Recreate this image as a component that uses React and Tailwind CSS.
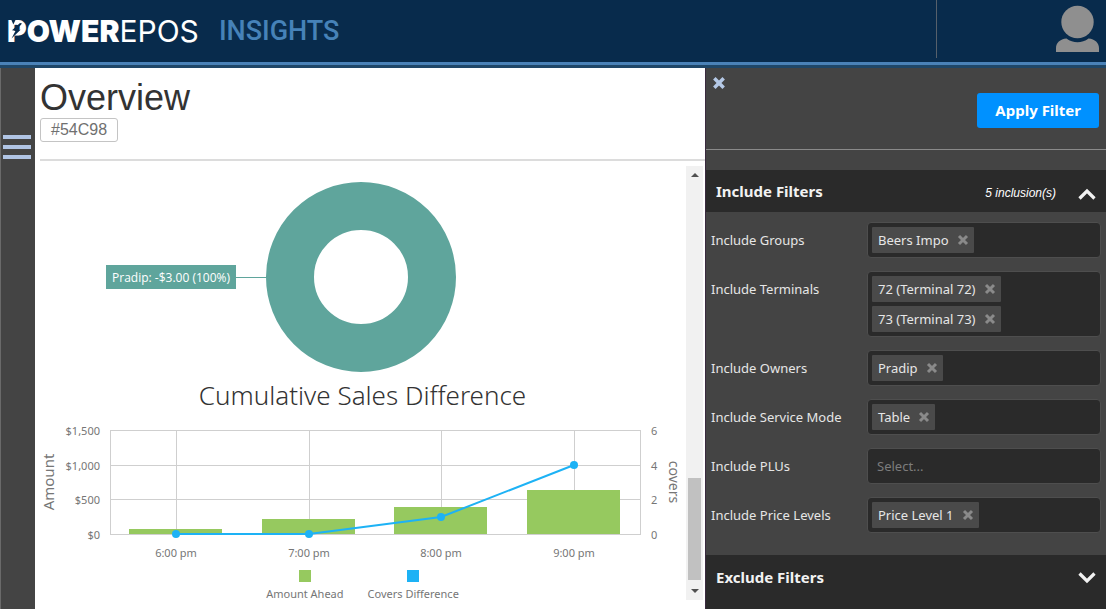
import { useState } from "react";

const GROUPS = [
  { id: "groups", label: "Include Groups", values: ["Beers Impo"] },
  { id: "terminals", label: "Include Terminals", values: ["72 (Terminal 72)", "73 (Terminal 73)"] },
  { id: "owners", label: "Include Owners", values: ["Pradip"] },
  { id: "service", label: "Include Service Mode", values: ["Table"] },
  { id: "plus", label: "Include PLUs", values: [] },
  { id: "prices", label: "Include Price Levels", values: ["Price Level 1"] },
];

function Cross({ className }) {
  return (
    <svg viewBox="0 0 12 12" className={className} aria-hidden="true">
      <path d="M2 2 L10 10 M10 2 L2 10" stroke="currentColor" strokeWidth="3" fill="none" />
    </svg>
  );
}

function Chevron({ up }) {
  return (
    <svg viewBox="0 0 18 12" className="h-3 w-[18px]" aria-hidden="true">
      <path
        d={up ? "M1.5 10.5 L9 3 L16.5 10.5" : "M1.5 1.5 L9 9 L16.5 1.5"}
        stroke="#f2f2f2"
        strokeWidth="3.2"
        fill="none"
      />
    </svg>
  );
}

function Logo() {
  return (
    <div className="flex items-center pl-[7px]">
      <div className="relative flex items-center font-['Inter',sans-serif] text-[30px] leading-8 text-white">
        <span className="font-black">POWER</span>
        <span className="font-normal">EPOS</span>
        <svg viewBox="0 0 20 24" className="absolute left-0 top-1 h-6 w-5" aria-hidden="true">
          <path d="M4 0 L9 0 L6.3 5.5 Z" fill="#082b4c" />
          <path d="M13 4 L5 11.2 L8.6 11.8 L4.5 19.5 L13.6 10.8 L10.4 10 L15 4.5 Z" fill="#082b4c" />
        </svg>
      </div>
      <span className="pl-5 font-['Roboto',sans-serif] text-[27px] font-medium leading-8 text-[#4682b8]">
        INSIGHTS
      </span>
    </div>
  );
}

function Header() {
  return (
    <header className="flex h-[68px] shrink-0 border-b-[3px] border-[#1f4768] bg-[#4a82b8] pb-[3px]">
      <div className="flex flex-1 items-start justify-between bg-[#082b4c]">
        <div className="pt-[15px]">
          <Logo />
        </div>
        <div className="flex h-[58px] w-[170px] justify-end border-l border-[#56606b] pr-[7px] pt-1">
          <button type="button" aria-label="Account" className="h-12 w-[43px]">
            <svg viewBox="0 0 43 48" className="h-12 w-[43px]" aria-hidden="true">
              <circle cx="21.5" cy="18" r="16.2" fill="#8f8f8f" />
              <path d="M0 48 V44 C0 39 4 35 10.5 34.5 C17 39.5 26 39.5 32.5 34.5 C39 35 43 39 43 44 V48 Z" fill="#8f8f8f" />
            </svg>
          </button>
        </div>
      </div>
    </header>
  );
}

function Donut() {
  return (
    <svg viewBox="0 0 651 210" className="h-[210px] w-full" role="img" aria-label="Sales by owner">
      <circle cx="326" cy="115" r="71" fill="none" stroke="#5fa59c" strokeWidth="48" />
      <path d="M201 115.5 H232" stroke="#5fa59c" strokeWidth="1" />
      <rect x="71" y="103" width="130" height="24" fill="#5fa59c" />
      <text x="136" y="120" textAnchor="middle" fill="#fff" fontSize="12" fontFamily="Open Sans, sans-serif">
        Pradip: -$3.00 (100%)
      </text>
    </svg>
  );
}

const BARS = [
  { x: 141, top: 111, time: "6:00 pm", y: 116 },
  { x: 274, top: 101, time: "7:00 pm", y: 116 },
  { x: 406, top: 89, time: "8:00 pm", y: 99 },
  { x: 539, top: 72, time: "9:00 pm", y: 47 },
];
const TICKS = [
  { y: 12, left: "$1,500", right: "6" },
  { y: 47, left: "$1,000", right: "4" },
  { y: 81, left: "$500", right: "2" },
  { y: 116, left: "$0", right: "0" },
];

function SalesChart() {
  return (
    <svg
      viewBox="0 0 651 146"
      className="h-[146px] w-full"
      role="img"
      aria-label="Cumulative Sales Difference"
      fontFamily="Noto Sans, sans-serif"
      fontSize="11"
      fill="#767676"
    >
      <g stroke="#cfcfcf" strokeWidth="1">
        {TICKS.map((t) => (
          <path key={t.y} d={`M75 ${t.y + 0.5} H606`} />
        ))}
        {BARS.map((b) => (
          <path key={b.x} d={`M${b.x + 0.5} 13 V116`} />
        ))}
        <path d="M75.5 12 V117 M605.5 12 V117" />
      </g>
      {BARS.map((b) => (
        <rect key={b.x} x={b.x - 47} y={b.top} width="93" height={116 - b.top} fill="#96c95f" />
      ))}
      <polyline points={BARS.map((b) => `${b.x},${b.y}`).join(" ")} fill="none" stroke="#1db2f5" strokeWidth="2" />
      {BARS.map((b) => (
        <circle key={b.x} cx={b.x} cy={b.y} r="4" fill="#1db2f5" />
      ))}
      {TICKS.map((t) => (
        <g key={t.y}>
          <text x="65" y={t.y + 5} textAnchor="end">{t.left}</text>
          <text x="616" y={t.y + 5}>{t.right}</text>
        </g>
      ))}
      {BARS.map((b) => (
        <text key={b.x} x={b.x} y="139" textAnchor="middle">{b.time}</text>
      ))}
      <text transform="translate(19 64) rotate(-90)" textAnchor="middle" fontSize="15">Amount</text>
      <text transform="translate(634 64) rotate(90)" textAnchor="middle" fontSize="14">covers</text>
    </svg>
  );
}

function LegendItem({ label, swatch }) {
  return (
    <li className="flex flex-col items-center gap-1">
      <span className={`size-3 ${swatch}`} />
      <span className="text-[11px] leading-4">{label}</span>
    </li>
  );
}

function Scrollbar() {
  return (
    <div className="flex h-[434px] w-[17px] shrink-0 flex-col items-center justify-between bg-[#f1f1f1] py-[6px]" aria-hidden="true">
      <svg viewBox="0 0 8 5" className="h-[5px] w-2"><path d="M0 5 L4 1 L8 5 Z" fill="#505050" /></svg>
      <div className="flex w-[13px] flex-1 flex-col justify-end pb-[9px]">
        <div className="h-[102px] bg-[#c1c1c1]" />
      </div>
      <svg viewBox="0 0 8 5" className="h-[5px] w-2"><path d="M0 0 L4 4 L8 0 Z" fill="#505050" /></svg>
    </div>
  );
}

function Overview() {
  return (
    <main className="flex min-w-0 flex-1 flex-col bg-white">
      <div className="ml-[5px] h-[93px] shrink-0 border-b-2 border-[#dcdcdc] pt-[10px] font-['Liberation_Sans',sans-serif]">
        <h1 className="text-4xl leading-10 text-[#333]">Overview</h1>
        <span className="inline-block h-6 rounded-[3px] border border-[#c4c4c4] px-[10px] text-base leading-[22px] text-[#707070]">
          #54C98
        </span>
      </div>
      <div className="flex min-h-0 flex-1 overflow-hidden">
        <div className="min-w-0 flex-1 pt-px">
          <Donut />
          <h2 className="h-[46px] pl-1 text-center text-[26px] font-light leading-[46px] text-[#333]">
            Cumulative Sales Difference
          </h2>
          <SalesChart />
          <ul className="flex justify-center gap-6 pl-1 pt-[6px] text-[#767676]">
            <LegendItem label="Amount Ahead" swatch="bg-[#96c95f]" />
            <LegendItem label="Covers Difference" swatch="bg-[#1db2f5]" />
          </ul>
        </div>
        <div className="pr-0.5 pt-[5px]">
          <Scrollbar />
        </div>
      </div>
    </main>
  );
}

function FilterField({ id, label, values }) {
  const [items, setItems] = useState(values);
  return (
    <div className="flex items-start">
      <label htmlFor={id} className="w-[156px] shrink-0 text-[13px] leading-9 text-[#e6e6e6]">
        {label}
      </label>
      <div className="flex min-h-9 min-w-0 flex-1 flex-wrap gap-1 rounded border border-[#4e4e4e] bg-[#2a2a2a] px-1 py-1">
        {items.map((v) => (
          <span key={v} className="flex h-[26px] items-center gap-2 rounded-[1px] bg-[#4a4a4a] pl-1.5 pr-[5px] text-[13px] leading-[26px] text-[#e6e6e6]">
            {v}
            <button type="button" aria-label={`Remove ${v}`} onClick={() => setItems(items.filter((i) => i !== v))}>
              <Cross className="size-3 text-[#8a8a8a]" />
            </button>
          </span>
        ))}
        <input
          id={id}
          placeholder={items.length ? "" : "Select..."}
          className="h-[26px] w-0 min-w-2 flex-1 bg-transparent pl-[5px] text-[13px] text-[#e6e6e6] outline-none placeholder:text-[#7c7c7c]"
        />
      </div>
    </div>
  );
}

function FilterPanel() {
  return (
    <aside className="flex w-[401px] shrink-0 flex-col border-l border-[#3a2a3f] bg-[#444]">
      <div className="flex h-[82px] shrink-0 items-start justify-between border-b border-[#8a8a8a] pl-[6px] pr-[7px]">
        <button type="button" aria-label="Close filters" className="pt-2">
          <Cross className="size-[14px] text-[#b5c9e6]" />
        </button>
        <button type="button" className="mt-[25px] h-[35px] rounded-[3px] bg-[#0091ff] px-[18px] text-[15px] font-bold text-white">
          Apply Filter
        </button>
      </div>
      <button type="button" aria-expanded="true" className="mt-5 flex h-[42px] shrink-0 items-center bg-[#2a2a2a] pl-2.5 pr-2.5 text-left">
        <span className="flex-1 text-[15px] font-bold text-[#f2f2f2]">Include Filters</span>
        <span className="pr-[22px] pt-1 font-['Liberation_Sans',sans-serif] text-xs italic text-white">5 inclusion(s)</span>
        <span className="pt-1.5"><Chevron up /></span>
      </button>
      <div className="flex shrink-0 flex-col gap-[13px] px-[5px] pb-[22px] pt-[10px]">
        {GROUPS.map((g) => (
          <FilterField key={g.id} {...g} />
        ))}
      </div>
      <div className="flex-1 bg-[#2a2a2a] pt-px">
        <button type="button" aria-expanded="false" className="flex h-[42px] w-full items-center pl-2.5 pr-2.5 text-left">
          <span className="flex-1 text-[15px] font-bold text-[#f2f2f2]">Exclude Filters</span>
          <span className="pt-0.5"><Chevron /></span>
        </button>
      </div>
    </aside>
  );
}

export default function App() {
  return (
    <div className="flex h-screen flex-col overflow-hidden bg-[#444] font-['Noto_Sans',sans-serif]">
      <Header />
      <div className="flex min-h-0 flex-1">
        <nav className="w-[35px] shrink-0 border-l border-[#6a6a6a] bg-[#444] pl-0.5 pt-[67px]">
          <button type="button" aria-label="Menu" className="flex w-7 flex-col gap-[6px]">
            <span className="h-1 w-full bg-[#b0c4e4]" />
            <span className="h-1 w-full bg-[#b0c4e4]" />
            <span className="h-1 w-full bg-[#b0c4e4]" />
          </button>
        </nav>
        <Overview />
        <FilterPanel />
      </div>
    </div>
  );
}
